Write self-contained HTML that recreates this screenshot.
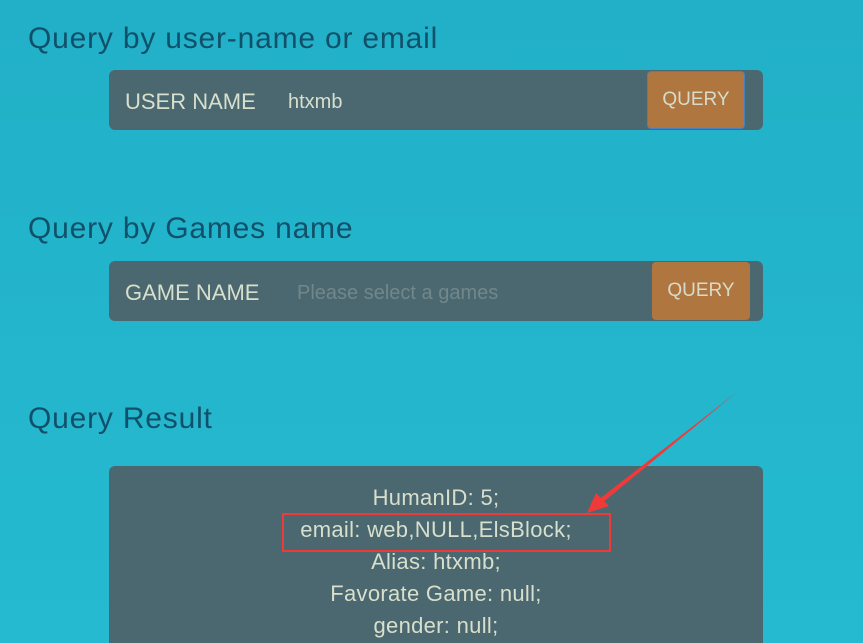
<!DOCTYPE html>
<html><head><style>
html,body{margin:0;width:863px;height:643px;overflow:hidden}
body{background:linear-gradient(#21b0c7,#25bad0);font-family:"Liberation Sans",sans-serif;position:relative}
.h{position:absolute;left:28px;font-size:30px;letter-spacing:0.8px;color:#11506a}
.bar{position:absolute;left:109px;width:654px;height:60px;background:#4b6870;border-radius:6px}
.lab{position:absolute;left:16px;top:19px;font-size:22px;color:#d8dfcc}
.val{position:absolute;top:21px;font-size:20px;color:#d8dfcc}
.btn{position:absolute;background:#b0763f;color:#d6dccb;font-size:19px;text-align:center;border-radius:4px}
.res{position:absolute;left:109px;top:466px;width:654px;height:177px;overflow:hidden;background:#4b6870;border-radius:6px 6px 0 0;text-align:center;color:#d8dfcc;font-size:22px;letter-spacing:0.3px;line-height:32px;padding-top:16px;box-sizing:border-box}
</style></head><body>
<div class="h" style="top:22px">Query by user-name or email</div>
<div class="bar" style="top:70px"><div class="lab">USER NAME</div><div class="val" style="left:179px">htxmb</div>
<div class="btn" style="left:538px;top:1px;width:96px;height:56px;line-height:56px;border:1px solid #4a7fc0">QUERY</div></div>
<div class="h" style="top:212px">Query by Games name</div>
<div class="bar" style="top:261px"><div class="lab">GAME NAME</div><div class="val" style="left:188px;color:#71878c">Please select a games</div>
<div class="btn" style="left:543px;top:1px;width:98px;height:58px;line-height:58px">QUERY</div></div>
<div class="h" style="top:402px">Query Result</div>
<div class="res">HumanID: 5;<br>email: web,NULL,ElsBlock;<br>Alias: htxmb;<br>Favorate Game: null;<br>gender: null;</div>
<div style="position:absolute;left:282px;top:513px;width:325px;height:35px;border:2px solid #f03a3a"></div>
<svg style="position:absolute;left:0;top:0" width="863" height="643"><polygon points="737,392 602,503 598,500" fill="#f03a3a"/><polygon points="587,513 596,493 609,506" fill="#f03a3a"/></svg>
</body></html>
